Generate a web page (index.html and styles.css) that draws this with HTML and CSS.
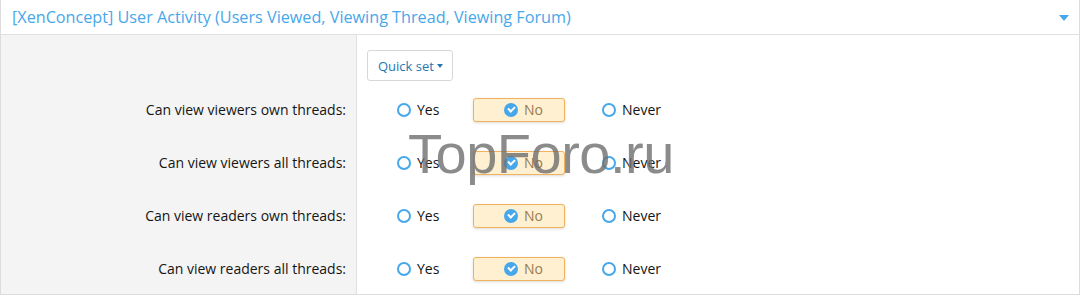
FILE: index.html
```html
<html><head><title>User Activity permissions</title>
<link rel="stylesheet" href="styles.css">
</head>
<body>
<div class="block">
  <div class="block-header">
    <span class="block-title">[XenConcept] User Activity (Users Viewed, Viewing Thread, Viewing Forum)</span>
    <span class="toggle"></span>
  </div>
  <div class="block-body">
    <div class="form-row">
      <div class="form-label"></div>
      <div class="form-input">
        <button class="quick-set">Quick set <span class="caret"></span></button>
      </div>
    </div>
    <div class="form-row perm">
      <div class="form-label">Can view viewers own threads:</div>
      <div class="form-input choices">
        <label class="choice"><span class="radio"></span>Yes</label>
        <label class="choice selected"><span class="radio checked"></span>No</label>
        <label class="choice"><span class="radio"></span>Never</label>
      </div>
    </div>
    <div class="form-row perm">
      <div class="form-label">Can view viewers all threads:</div>
      <div class="form-input choices">
        <label class="choice"><span class="radio"></span>Yes</label>
        <label class="choice selected"><span class="radio checked"></span>No</label>
        <label class="choice"><span class="radio"></span>Never</label>
      </div>
    </div>
    <div class="form-row perm">
      <div class="form-label">Can view readers own threads:</div>
      <div class="form-input choices">
        <label class="choice"><span class="radio"></span>Yes</label>
        <label class="choice selected"><span class="radio checked"></span>No</label>
        <label class="choice"><span class="radio"></span>Never</label>
      </div>
    </div>
    <div class="form-row perm">
      <div class="form-label">Can view readers all threads:</div>
      <div class="form-input choices">
        <label class="choice"><span class="radio"></span>Yes</label>
        <label class="choice selected"><span class="radio checked"></span>No</label>
        <label class="choice"><span class="radio"></span>Never</label>
      </div>
    </div>
  </div>
  <div class="watermark">TopForo.ru</div>
</div>
</body>
</html>
```

FILE: styles.css
```css
body, html {
  margin: 0;
  padding: 0;
  background: #fff;
  font-family: 'Open Sans', 'Noto Sans', sans-serif;
  font-size: 14px;
  color: #141414;
}
.block {
  position: relative;
  border: 1px solid #dcdcdc;
  border-top: none;
  height: 295px;
  box-sizing: border-box;
}
.block-header {
  display: flex;
  align-items: center;
  justify-content: space-between;
  height: 35px;
  padding: 0 10px 0 11px;
  border-bottom: 1px solid #e0e0e0;
  box-sizing: border-box;
}
.block-title {
  color: #47a7eb;
  font-size: 16.2px;
}
.toggle {
  width: 0;
  height: 0;
  border-left: 5px solid transparent;
  border-right: 5px solid transparent;
  border-top: 6px solid #47a7eb;
  margin-top: 1px;
}
.block-body {
  background: linear-gradient(to right, #f4f4f4 355px, #e0e0e0 355px, #e0e0e0 356px, #fff 356px);
  height: 259px;
}
.form-row {
  display: flex;
  align-items: center;
}
.form-row:first-child {
  padding-top: 15px;
  height: 31px;
}
.form-row.perm {
  height: 53px;
}
.form-row.perm:nth-child(2) {
  margin-top: 2px;
}
.form-label {
  width: 345px;
  text-align: right;
  padding-right: 10px;
  font-size: 14px;
}
.form-input {
  padding-left: 11px;
}
.quick-set {
  background: #fff;
  border: 1px solid #d8d8d8;
  border-radius: 3px;
  height: 31px;
  padding: 0 9px 0 10px;
  color: #2577b1;
  font-family: inherit;
  font-size: 13px;
  display: flex;
  align-items: center;
  gap: 3px;
}
.caret {
  width: 0;
  height: 0;
  border-left: 3.5px solid transparent;
  border-right: 3.5px solid transparent;
  border-top: 4px solid #2577b1;
}
.choices {
  display: flex;
  align-items: center;
  padding-left: 41px;
}
.choice {
  display: flex;
  align-items: center;
  gap: 6px;
  height: 22px;
  box-sizing: border-box;
  font-size: 14px;
  width: 76px;
}
.choice.selected {
  background: #fef0d0;
  border: 1px solid #f0b25c;
  border-radius: 3px;
  box-shadow: 0 1px 3px rgba(0,0,0,0.15);
  width: 92px;
  height: 24px;
  padding-left: 30px;
  margin-right: 37px;
  color: #9a7b4f;
}
.radio {
  width: 14px;
  height: 14px;
  border: 2px solid #47a7eb;
  border-radius: 50%;
  box-sizing: border-box;
  background: #fff;
  position: relative;
}
.radio.checked {
  background: #47a7eb;
}
.radio.checked::after {
  content: '';
  position: absolute;
  left: 2px;
  top: 1.5px;
  width: 5px;
  height: 3px;
  border-left: 2px solid #fff;
  border-bottom: 2px solid #fff;
  transform: rotate(-45deg);
}
.watermark {
  position: absolute;
  left: 407px;
  top: 121px;
  font-family: 'Liberation Sans', Arial, sans-serif;
  font-size: 56px;
  color: rgba(110,110,110,0.8);
  letter-spacing: -0.5px;
  pointer-events: none;
}
```
